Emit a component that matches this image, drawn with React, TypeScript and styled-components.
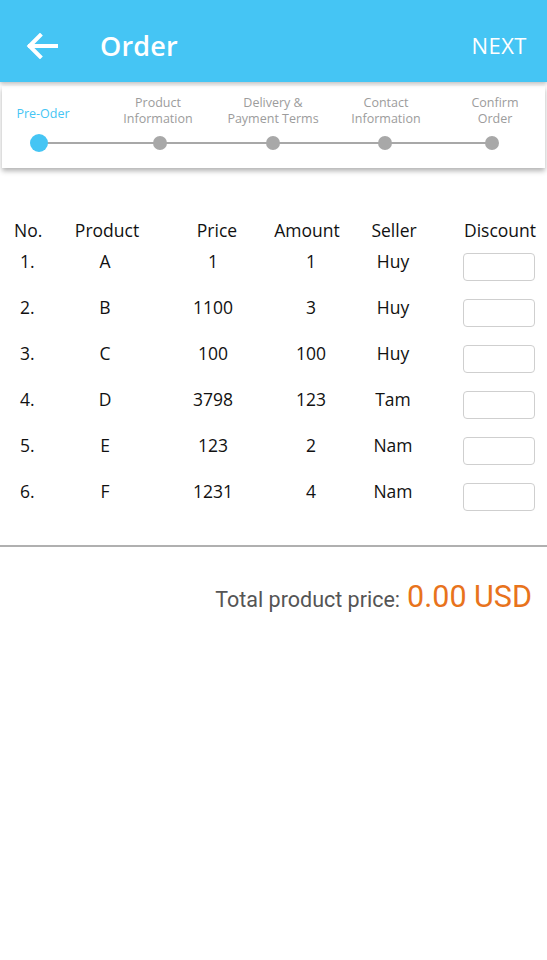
import React from "react";
import styled, { createGlobalStyle } from "styled-components";

const Global = createGlobalStyle`
  html, body { margin: 0; padding: 0; background: #fff; }
  body { font-family: "Open Sans", "Noto Sans", sans-serif; width: 547px; min-height: 960px; overflow: hidden; }
  * { box-sizing: border-box; }
`;

const Page = styled.div`
  width: 547px;
  min-height: 960px;
  background: #fff;
  display: flex;
  flex-direction: column;
`;

const Header = styled.header`
  height: 82px;
  background: #45c5f4;
  display: flex;
  align-items: center;
  padding: 8px 20px 0 26px;
  color: #fff;
  box-shadow: 0 2px 4px rgba(0, 0, 0, 0.25);
  position: relative;
  z-index: 2;
`;

const BackButton = styled.div`
  width: 32px;
  height: 28px;
  display: flex;
  align-items: center;
  margin-top: 2px;
`;

const Title = styled.h1`
  margin: 0 0 0 42px;
  font-size: 27px;
  font-weight: 600;
  flex: 1;
  letter-spacing: 0.2px;
`;

const Next = styled.span`
  font-size: 22px;
  font-weight: 400;
  letter-spacing: 0.5px;
`;

const StepCard = styled.section`
  margin: 4px 2px 0;
  height: 82px;
  background: #fff;
  box-shadow: 0 3px 5px rgba(0, 0, 0, 0.3);
  position: relative;
  z-index: 1;
`;

const Steps = styled.div`
  display: grid;
  grid-template-columns: 74px 168px 58px 166px 48px;
  position: relative;
  height: 100%;
  &::before {
    content: "";
    position: absolute;
    left: 37px;
    width: 453px;
    top: 56px;
    height: 2px;
    background: #a8a8a8;
  }
`;

const Step = styled.div`
  display: flex;
  flex-direction: column;
  align-items: center;
  min-width: 0;
`;

const StepLabel = styled.div<{ $active?: boolean; $dx?: number }>`
  height: 32px;
  margin-top: 9px;
  margin-bottom: -1px;
  display: flex;
  align-items: center;
  justify-content: center;
  white-space: nowrap;
  text-align: center;
  font-size: 12.5px;
  line-height: 16px;
  color: ${(p) => (p.$active ? "#45c5f4" : "#9c9c9c")};
  padding-top: ${(p) => (p.$active ? "6px" : "0")};
  transform: translateX(${(p) => p.$dx ?? 0}px);
`;

const Dot = styled.span<{ $active?: boolean }>`
  position: relative;
  z-index: 1;
  width: ${(p) => (p.$active ? "18px" : "14px")};
  height: ${(p) => (p.$active ? "18px" : "14px")};
  border-radius: 50%;
  background: ${(p) => (p.$active ? "#45c5f4" : "#a8a8a8")};
  margin-top: ${(p) => (p.$active ? "8px" : "10px")};
`;

const Table = styled.section`
  margin-top: 50px;
  display: flex;
  flex-direction: column;
`;

const Row = styled.div<{ $head?: boolean }>`
  display: grid;
  grid-template-columns: 60px 90px 130px 62px 102px 103px;
  height: ${(p) => (p.$head ? "31px" : "46px")};
  align-items: start;
  font-size: 17.5px;
  line-height: 24px;
  color: #111;
`;

/* $o = horizontal offset of the text's centre within its column */
const Cell = styled.div<{ $o?: number }>`
  display: flex;
  justify-content: center;
  white-space: nowrap;
  min-width: 0;
  padding-left: ${(p) => Math.max(0, 2 * (p.$o ?? 0))}px;
  padding-right: ${(p) => Math.max(0, -2 * (p.$o ?? 0))}px;
`;

const NoCell = styled.div<{ $head?: boolean }>`
  padding-left: ${(p) => (p.$head ? "14px" : "20px")};
`;

const DiscountInput = styled.div`
  margin: 4px 0 0 19px;
  width: 72px;
  height: 28px;
  border: 1px solid #cfcfcf;
  border-radius: 4px;
  background: #fff;
`;

const Divider = styled.hr`
  margin: 20px 0 0;
  border: none;
  height: 2px;
  background: #b0b0b0;
`;

const Total = styled.div`
  display: flex;
  justify-content: flex-end;
  align-items: baseline;
  gap: 7px;
  padding: 32px 15px 0 0;
  font-family: Roboto, "Noto Sans", sans-serif;
`;

const TotalLabel = styled.span`
  font-size: 21.5px;
  color: #555;
`;

const TotalValue = styled.span`
  font-size: 30.5px;
  color: #e8731c;
`;

const steps = [
  { label: "Pre-Oder", active: true, dx: 4 },
  { label: "Product\nInformation", dx: -2 },
  { label: "Delivery &\nPayment Terms", dx: 0 },
  { label: "Contact\nInformation", dx: 1 },
  { label: "Confirm\nOrder", dx: 3 },
];

const rows = [
  ["1.", "A", "1", "1", "Huy"],
  ["2.", "B", "1100", "3", "Huy"],
  ["3.", "C", "100", "100", "Huy"],
  ["4.", "D", "3798", "123", "Tam"],
  ["5.", "E", "123", "2", "Nam"],
  ["6.", "F", "1231", "4", "Nam"],
];

export default function App() {
  return (
    <Page>
      <Global />
      <Header>
        <BackButton>
          <svg width="32" height="26" viewBox="0 0 32 26" fill="none">
            <path d="M30 13H4M14 2.5L3.5 13L14 23.5" stroke="#fff" strokeWidth="4" strokeLinecap="square" strokeLinejoin="miter" />
          </svg>
        </BackButton>
        <Title>Order</Title>
        <Next>NEXT</Next>
      </Header>
      <StepCard>
        <Steps>
          {steps.map((s, i) => (
            <Step key={i}>
              <StepLabel $active={s.active} $dx={s.dx}>
                <span>
                  {s.label.split("\n").map((l, j) => (
                    <div key={j}>{l}</div>
                  ))}
                </span>
              </StepLabel>
              <Dot $active={s.active} />
            </Step>
          ))}
        </Steps>
      </StepCard>
      <Table>
        <Row $head>
          <NoCell $head>No.</NoCell>
          <Cell $o={2}>Product</Cell>
          <Cell $o={2}>Price</Cell>
          <Cell $o={-4}>Amount</Cell>
          <Cell $o={1}>Seller</Cell>
          <Cell $o={4.5}>Discount</Cell>
        </Row>
        {rows.map((r, i) => (
          <Row key={i}>
            <NoCell>{r[0]}</NoCell>
            <Cell>{r[1]}</Cell>
            <Cell $o={-2}>{r[2]}</Cell>
            <Cell>{r[3]}</Cell>
            <Cell>{r[4]}</Cell>
            <div>
              <DiscountInput />
            </div>
          </Row>
        ))}
      </Table>
      <Divider />
      <Total>
        <TotalLabel>Total product price:</TotalLabel>
        <TotalValue>0.00 USD</TotalValue>
      </Total>
    </Page>
  );
}
